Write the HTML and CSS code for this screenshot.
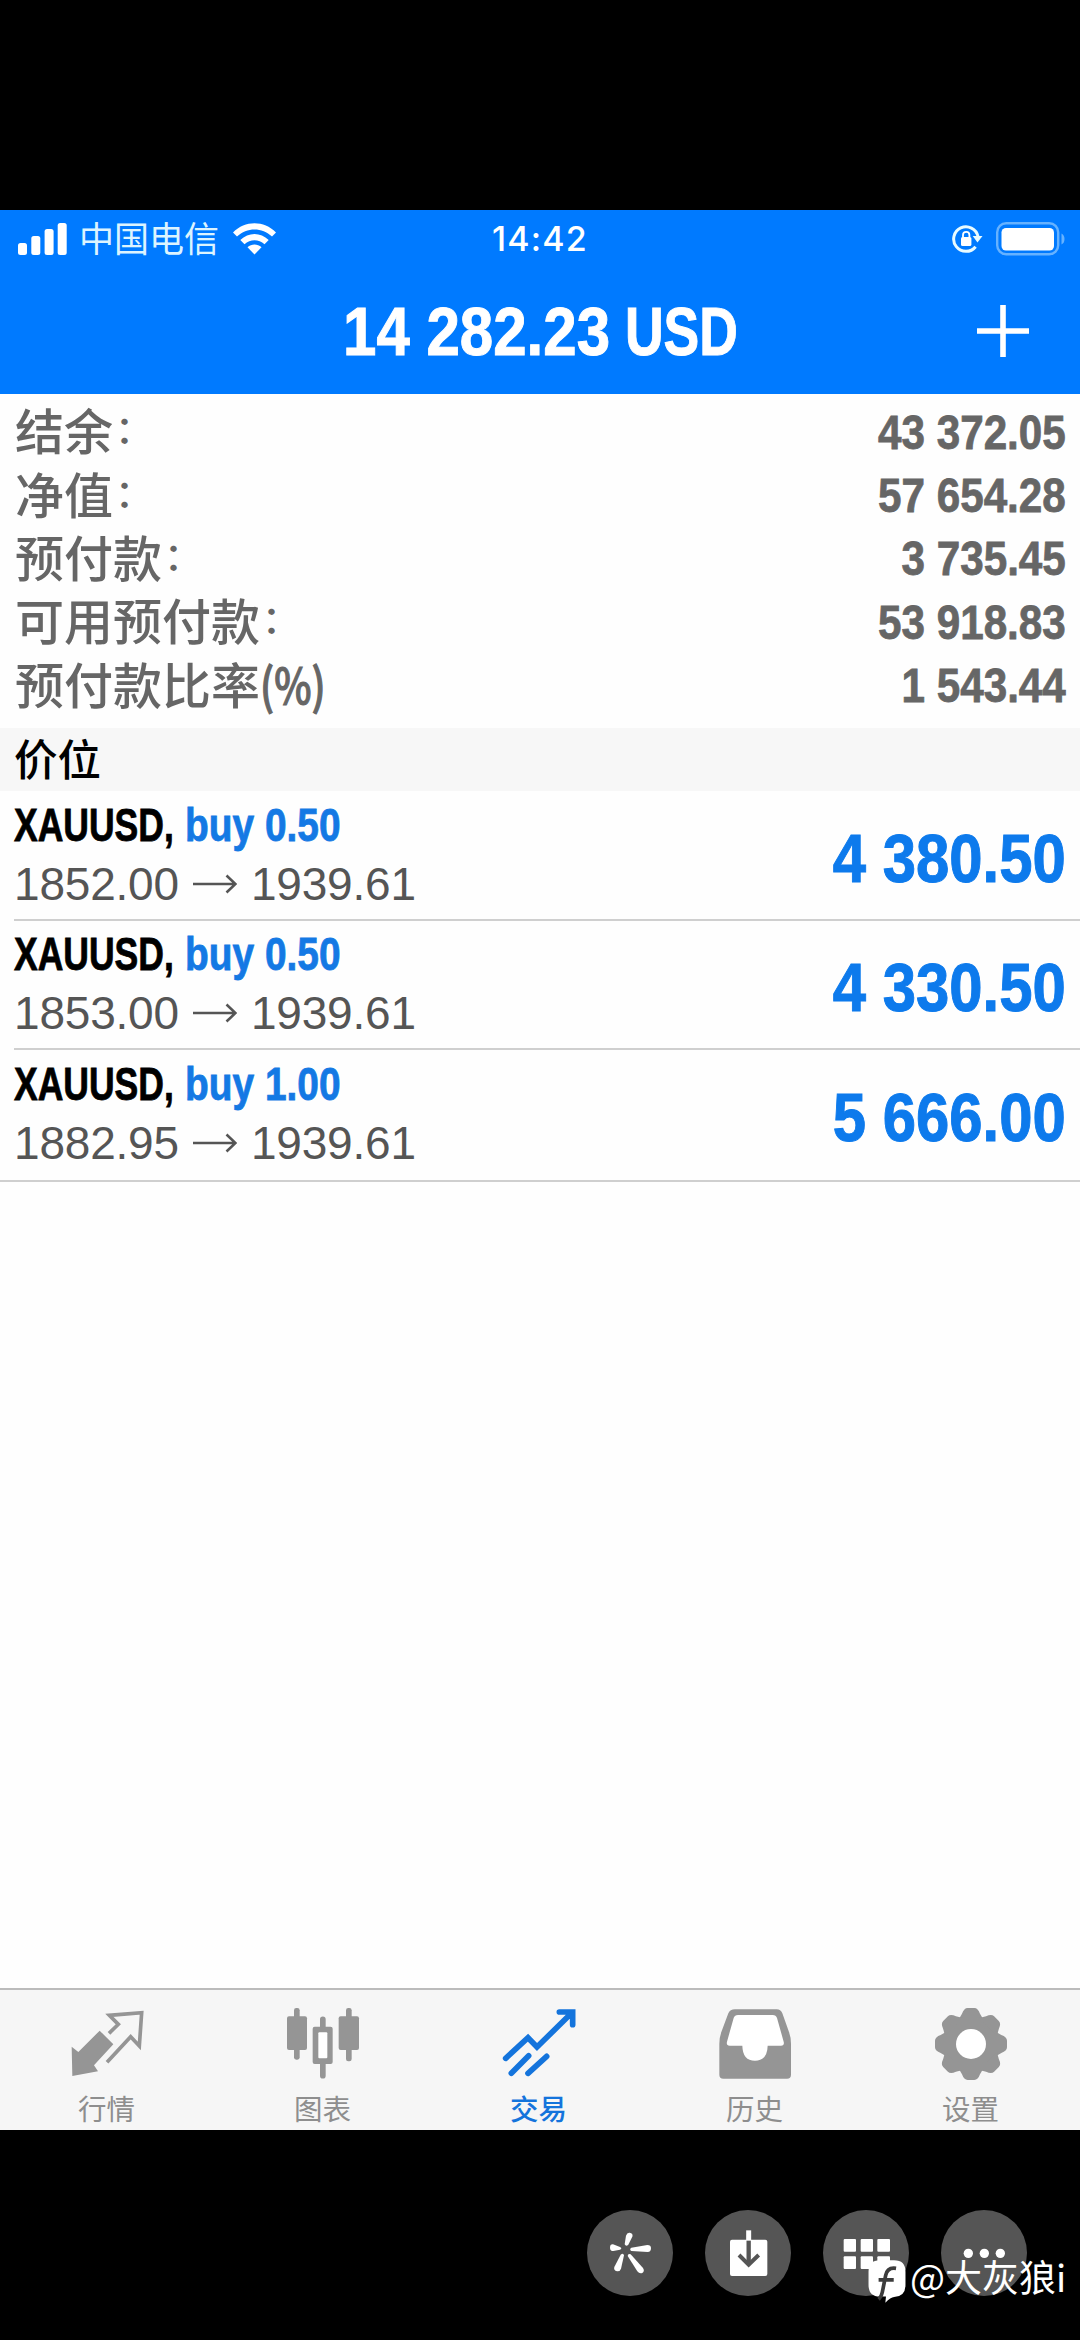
FILE: index.html
```html
<!DOCTYPE html>
<html lang="zh-CN">
<head>
<meta charset="utf-8">
<title>交易</title>
<link rel="stylesheet" href="styles.css">
</head>
<body>
<main class="app">
  <header class="header">
    <div class="status">
      <div class="status-left">
        <svg class="signal" width="50" height="32" viewBox="0 0 50 32"><rect x="0" y="20" width="9" height="12" rx="2.5"/><rect x="13.3" y="13" width="9" height="19" rx="2.5"/><rect x="26.6" y="6" width="9" height="26" rx="2.5"/><rect x="39.7" y="0" width="9" height="32" rx="2.5"/></svg>
        <span class="carrier">中国电信</span>
        <svg class="wifi" width="43" height="32" viewBox="0 0 43 32"><path d="M0 9.500C12-2.800 31-2.800 43 9.500L39 13.600C29.200 4 13.800 4 4 13.600Z"/><path d="M7.300 17C15.500 9 27.500 9 35.700 17L31.500 21.200C25.800 16 17.200 16 11.500 21.200Z"/><path d="M14.500 24.200C18.500 20.700 24.500 20.700 28.500 24.200L21.500 31.500Z"/></svg>
      </div>
      <span class="clock">14:42</span>
      <div class="status-right">
        <svg width="31" height="30" viewBox="0 0 31 30"><path d="M23.600 22.700A12.300 12.300 0 1 1 26 12.500" fill="none" stroke="#e8fbff" stroke-width="3"/><path d="M20.700 12h9.800l-5 6.500z" fill="#e8fbff"/><rect x="9" y="13" width="10.400" height="9" rx="1.500" fill="#fff"/><path d="M11 13.500v-2.500a3.200 3.200 0 0 1 6.400 0v2.500" fill="none" stroke="#fff" stroke-width="1.800"/></svg>
        <svg width="70" height="34" viewBox="0 0 70 34"><rect x="1.200" y="1.200" width="61" height="31" rx="9" fill="none" stroke="#66b2ff" stroke-width="2.400"/><rect x="5.500" y="6" width="52.500" height="22.500" rx="4.500" fill="#fff"/><path d="M65.500 11.500q3 1.500 3 5.500t-3 5.500z" fill="#66b2ff"/></svg>
      </div>
    </div>
    <div class="nav">
      <h1 class="title"><span class="title-sum">14 282.23</span><span class="title-cur">USD</span></h1>
      <svg class="plus" width="54" height="54" viewBox="0 0 54 54"><path d="M1 27h52M27 1v52" stroke="#fff" stroke-width="5.600"/></svg>
    </div>
  </header>

  <section class="summary">
    <div class="line"><span class="label">结余<i class="colon">：</i></span><span class="value">43 372.05</span></div>
    <div class="line"><span class="label">净值<i class="colon">：</i></span><span class="value">57 654.28</span></div>
    <div class="line"><span class="label">预付款<i class="colon">：</i></span><span class="value">3 735.45</span></div>
    <div class="line"><span class="label">可用预付款<i class="colon">：</i></span><span class="value">53 918.83</span></div>
    <div class="line"><span class="label">预付款比率<i class="percent">(%)</i></span><span class="value">1 543.44</span></div>
  </section>

  <h2 class="section-title">价位</h2>

  <section class="positions">
    <article class="position">
      <div class="info">
        <div class="deal"><span class="symbol">XAUUSD,</span><span class="side">buy 0.50</span></div>
        <div class="prices"><span>1852.00</span><svg class="arrow" width="44" height="22" viewBox="0 0 44 22"><path d="M0 11h42M33.500 2.500L42.500 11L33.500 19.500"/></svg><span>1939.61</span></div>
      </div>
      <span class="profit">4 380.50</span>
    </article>
    <article class="position">
      <div class="info">
        <div class="deal"><span class="symbol">XAUUSD,</span><span class="side">buy 0.50</span></div>
        <div class="prices"><span>1853.00</span><svg class="arrow" width="44" height="22" viewBox="0 0 44 22"><path d="M0 11h42M33.500 2.500L42.500 11L33.500 19.500"/></svg><span>1939.61</span></div>
      </div>
      <span class="profit">4 330.50</span>
    </article>
    <article class="position last">
      <div class="info">
        <div class="deal"><span class="symbol">XAUUSD,</span><span class="side">buy 1.00</span></div>
        <div class="prices"><span>1882.95</span><svg class="arrow" width="44" height="22" viewBox="0 0 44 22"><path d="M0 11h42M33.500 2.500L42.500 11L33.500 19.500"/></svg><span>1939.61</span></div>
      </div>
      <span class="profit">5 666.00</span>
    </article>
  </section>

  <nav class="tabbar">
    <div class="tabs">
      <a class="tab">
        <svg class="icon" viewBox="204 108 228 216"><path d="M212 230L232 246L296 182L337 223L279 286L291 304L214 318Z" fill="#959595"/><path d="M324 190L352 163L325 136L422 128L415 228L389 200L318 277" fill="none" stroke="#959595" stroke-width="11"/></svg>
        <span>行情</span>
      </a>
      <a class="tab">
        <svg class="icon" viewBox="854 108 228 216"><g fill="#959595"><rect x="881" y="114" width="17" height="155" rx="7"/><rect x="860" y="139" width="60" height="101" rx="6"/><rect x="1037" y="114" width="17" height="160" rx="7"/><rect x="1015" y="139" width="61" height="101" rx="6"/><path d="M959 170V148a8.500 8.500 0 0 1 17 0V170H991a6 6 0 0 1 6 6V276a6 6 0 0 1-6 6H976V317a8.500 8.500 0 0 1-17 0V282H943a6 6 0 0 1-6-6V176a6 6 0 0 1 6-6Z"/></g><rect x="954" y="187" width="27" height="78" rx="3" fill="#fff"/></svg>
        <span>图表</span>
      </a>
      <a class="tab active">
        <svg class="icon" viewBox="301 108 228 216"><path d="M315 265L382 203L409 231L512 130M476 126H516V164M332 310L384 257M382 310L438 259" fill="none" stroke="#1474dc" stroke-width="17" stroke-linecap="round"/></svg>
        <span>交易</span>
      </a>
      <a class="tab">
        <svg class="icon" viewBox="109 108 228 216"><path d="M163 118H288Q300 118 305 130L325 186Q331 202 331 222V314Q331 326 319 326H128Q116 326 116 314V222Q116 202 122 186L143 130Q148 118 163 118Z" fill="#959595"/><path d="M172 135H276Q286 135 289 144L309 215Q312 227 301 227H261Q260 272 223 272Q186 272 185 227H147Q136 227 139 215L159 144Q162 135 172 135Z" fill="#fff"/></svg>
        <span>历史</span>
      </a>
      <a class="tab">
        <svg class="icon" viewBox="758 108 228 216"><defs><path id="tooth" d="M-38-72L-27-91Q-21-108-10-108H10Q21-108 27-91L38-72Z"/></defs><g transform="translate(872 222)" fill="#959595"><circle r="83"/><use href="#tooth"/><use href="#tooth" transform="rotate(45)"/><use href="#tooth" transform="rotate(90)"/><use href="#tooth" transform="rotate(135)"/><use href="#tooth" transform="rotate(180)"/><use href="#tooth" transform="rotate(225)"/><use href="#tooth" transform="rotate(270)"/><use href="#tooth" transform="rotate(315)"/><circle r="45" fill="#fff"/></g></svg>
        <span>设置</span>
      </a>
    </div>
  </nav>
</main>

<footer class="viewer">
  <svg class="round" viewBox="78 90 258 258"><circle cx="207" cy="219" r="129" fill="#555"/><g fill="#fff"><path d="M191 193L195 167Q198 157 206 158Q217 160 214 170L202 194Q195 201 191 193Z"/><path d="M177 201L156 193Q147 192 147 203Q147 213 157 213L177 209Q185 205 177 201Z"/><path d="M211 203L259 195Q270 195 270 205Q270 216 260 216L211 213Q204 208 211 203Z"/><path d="M179 224L160 261Q157 271 168 274Q177 275 180 266L189 226Q187 218 179 224Z"/><path d="M209 223L246 264Q252 273 244 279Q235 282 229 274L200 228Q201 219 209 223Z"/></g></svg>
  <svg class="round" viewBox="432 90 258 258"><circle cx="561" cy="219" r="129" fill="#555"/><rect x="507" y="179" width="112" height="109" rx="6" fill="#fff"/><path d="M563 151V180" stroke="#fff" stroke-width="15"/><path d="M563 182V250" stroke="#555" stroke-width="13"/><path d="M534 225L563 254L593 225" fill="none" stroke="#555" stroke-width="12"/></svg>
  <svg class="round" viewBox="66 90 258 258"><circle cx="195" cy="219" r="129" fill="#555"/><g fill="#fff"><rect x="128" y="177" width="37" height="38" rx="3"/><rect x="179" y="177" width="37" height="38" rx="3"/><rect x="229" y="177" width="38" height="38" rx="3"/><rect x="128" y="229" width="37" height="38" rx="3"/><rect x="179" y="229" width="37" height="38" rx="3"/><rect x="229" y="229" width="38" height="38" rx="3"/></g></svg>
  <svg class="round" viewBox="420 90 258 258"><circle cx="549" cy="219" r="129" fill="#555"/><g fill="#fff"><circle cx="502" cy="220" r="14"/><circle cx="550" cy="220" r="14"/><circle cx="598" cy="220" r="14"/></g></svg>
  <div class="watermark">
    <svg width="38" height="43" viewBox="205 241 112 128"><path d="M240 242H282Q316 242 316 276V315Q316 350 282 351Q272 352 256 368L258 350H240Q206 350 206 315V276Q206 242 240 242Z" fill="#fff"/><path d="M288 266Q262 262 257 287L247 337Q245 350 236 358M236 300H281" fill="none" stroke="#3c3c3c" stroke-width="11"/></svg>
    <span class="author">@大灰狼i</span>
  </div>
</footer>
</body>
</html>
```
FILE: styles.css
```css
* { box-sizing: border-box; }

body {
  margin: 0;
  width: 1080px;
  height: 2340px;
  padding-top: 210px;
  background: #000;
  font-family: "Liberation Sans", "Noto Sans CJK SC", sans-serif;
  overflow: hidden;
}

h1, h2 { margin: 0; font-weight: 700; }
i { font-style: normal; }
svg { display: block; flex: none; }

.app {
  display: flex;
  flex-direction: column;
  height: 1920px;
  background: #fefefe;
}

/* Header */
.header {
  height: 184px;
  background: #007aff;
  color: #fff;
}

.status {
  display: grid;
  grid-template-columns: 1fr auto 1fr;
  align-items: center;
  height: 58px;
  padding: 0 14px 0 18px;
}

.status-left, .status-right { display: flex; align-items: center; }
.status-right { justify-content: flex-end; gap: 13px; }
.signal, .wifi { fill: #fff; }

.carrier {
  margin: -4px 14px 0 11px;
  font: 400 35px/50px "Noto Sans CJK SC", sans-serif;
  color: #dcf4ff;
}

.clock {
  margin-left: -4px;
  font: 500 34px/50px Inter, sans-serif;
  letter-spacing: 1.2px;
}

.nav {
  display: grid;
  grid-template-columns: 1fr auto 1fr;
  align-items: center;
  height: 126px;
  padding: 0 50px 0 52px;
}

.title {
  grid-column: 2;
  display: flex;
  width: 396px;
  padding-top: 2px;
  font-size: 69px;
  line-height: 80px;
  white-space: nowrap;
  -webkit-text-stroke: 1px currentColor;
}

.title-sum {
  width: 282px;
  transform: scaleX(.87);
  transform-origin: left;
}

.title-cur {
  transform: scaleX(.775);
  transform-origin: left;
}

.plus { justify-self: end; }

/* Account summary */
.summary {
  height: 334px;
  padding: 6px 14px 0 15px;
  color: #666;
}

.line {
  display: flex;
  justify-content: space-between;
  align-items: center;
  height: 63.4px;
}

.label {
  padding-bottom: 6px;
  font: 500 49px/57px "Noto Sans CJK SC", sans-serif;
}

.colon {
  position: relative;
  top: -7px;
  left: 2px;
  font-size: 38px;
  line-height: 1;
}

.percent {
  display: inline-block;
  transform: scaleX(.81);
  transform-origin: left;
  -webkit-text-stroke: 1.2px currentColor;
}

.value {
  font-size: 48.5px;
  font-weight: 700;
  transform: scaleX(.87);
  transform-origin: right;
  -webkit-text-stroke: .8px currentColor;
}

.section-title {
  height: 63px;
  padding-left: 14px;
  background: #f7f7f7;
  color: #000;
  font: 500 43.5px/59px "Noto Sans CJK SC", sans-serif;
}

/* Open positions */
.position {
  display: flex;
  justify-content: space-between;
  height: 129.5px;
  margin-left: 14px;
  padding: 3.5px 14px 0 0;
  border-bottom: 2px solid #cfcfcf;
}

.position.last {
  height: 131.5px;
  margin-left: 0;
  padding-left: 14px;
}

.deal {
  display: flex;
  padding-top: 1px;
  font-size: 46px;
  font-weight: 700;
  line-height: 58px;
  white-space: nowrap;
  -webkit-text-stroke: .8px currentColor;
}

.symbol {
  width: 170.5px;
  color: #000;
  transform: scaleX(.772);
  transform-origin: left;
}

.side {
  color: #1479e4;
  transform: scaleX(.845);
  transform-origin: left;
}

.prices {
  display: flex;
  align-items: center;
  gap: 14px;
  color: #555;
  font-size: 46px;
  letter-spacing: -.2px;
  line-height: 60px;
}

.arrow { fill: none; stroke: #555; stroke-width: 2.6px; }

.profit {
  color: #0d7aec;
  font-size: 68px;
  font-weight: 700;
  line-height: 126px;
  transform: scaleX(.88);
  transform-origin: right;
  -webkit-text-stroke: 1px currentColor;
}

/* Tab bar */
.tabbar {
  height: 142px;
  margin-top: auto;
  border-top: 2px solid #bbb;
  background: #f6f6f6;
}

.tabs {
  display: grid;
  grid-template-columns: repeat(5, 216px);
  margin-left: -1.5px;
  padding-top: 16px;
}

.tab {
  display: flex;
  flex-direction: column;
  align-items: center;
  gap: 11px;
  color: #8e8e8e;
  font: 400 28.5px/37px "Noto Sans CJK SC", sans-serif;
}

.tab.active { color: #1474dc; font-weight: 500; }
.icon { width: 76px; height: 72px; overflow: visible; }

/* Photo viewer controls */
.viewer {
  position: relative;
  display: flex;
  justify-content: flex-end;
  gap: 32px;
  height: 210px;
  padding: 80px 53.5px 0 0;
}

.round { width: 86px; height: 86px; }

.watermark {
  position: absolute;
  left: 868px;
  top: 130px;
  display: flex;
  gap: 4px;
  color: #fff;
  font: 400 37px/44px "Noto Sans CJK SC", sans-serif;
  white-space: nowrap;
}

.author { margin-top: -6px; }
```
